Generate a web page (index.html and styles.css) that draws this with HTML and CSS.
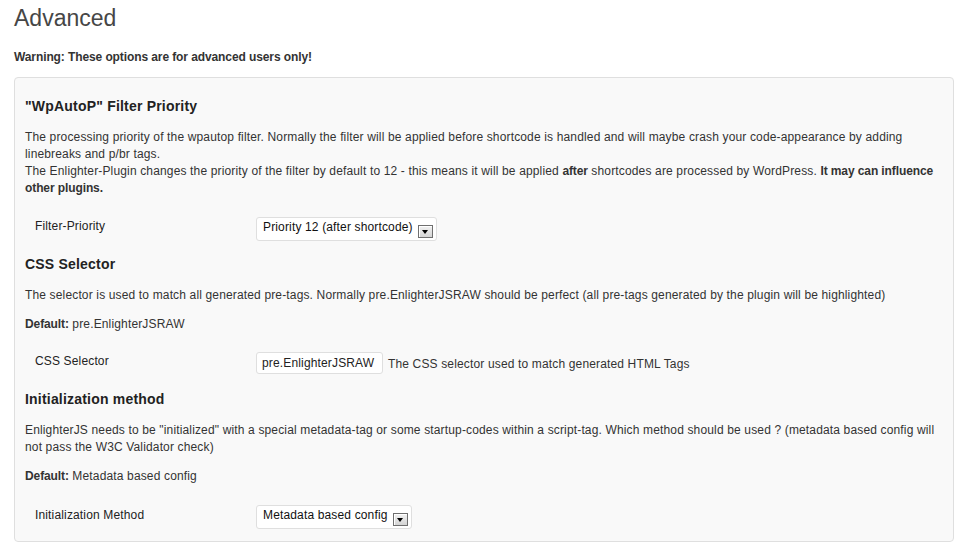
FILE: index.html
```html
<!DOCTYPE html>
<html>
<head>
<meta charset="utf-8">
<title>Advanced</title>
<link rel="stylesheet" href="styles.css">
</head>
<body>
<div class="wrap">
  <h2 class="page-title">Advanced</h2>
  <p class="warning"><strong>Warning: These options are for advanced users only!</strong></p>
  <div class="panel">
    <h3 class="section-title">"WpAutoP" Filter Priority</h3>
    <p class="desc">The processing priority of the wpautop filter. Normally the filter will be applied before shortcode is handled and will maybe crash your code-appearance by adding linebreaks and p/br tags.<br>The Enlighter-Plugin changes the priority of the filter by default to 12 - this means it will be applied <strong>after</strong> shortcodes are processed by WordPress. <strong>It may can influence</strong> <strong>other plugins.</strong></p>
    <div class="form-row row-first">
      <div class="form-label">Filter-Priority</div>
      <div class="form-field">
        <div class="select"><span class="select-text">Priority 12 (after shortcode)</span><span class="select-btn"><span class="select-arrow"></span></span></div>
      </div>
    </div>

    <h3 class="section-title">CSS Selector</h3>
    <p class="desc">The selector is used to match all generated pre-tags. Normally pre.EnlighterJSRAW should be perfect (all pre-tags generated by the plugin will be highlighted)</p>
    <p class="desc"><strong>Default:</strong> pre.EnlighterJSRAW</p>
    <div class="form-row row-input">
      <div class="form-label">CSS Selector</div>
      <div class="form-field">
        <input class="text-input" type="text" value="pre.EnlighterJSRAW">
        <span class="help">The CSS selector used to match generated HTML Tags</span>
      </div>
    </div>

    <h3 class="section-title">Initialization method</h3>
    <p class="desc">EnlighterJS needs to be "initialized" with a special metadata-tag or some startup-codes within a script-tag. Which method should be used ? (metadata based config will not pass the W3C Validator check)</p>
    <p class="desc"><strong>Default:</strong> Metadata based config</p>
    <div class="form-row row-last">
      <div class="form-label">Initialization Method</div>
      <div class="form-field">
        <div class="select"><span class="select-text">Metadata based config</span><span class="select-btn"><span class="select-arrow"></span></span></div>
      </div>
    </div>
  </div>
</div>
</body>
</html>
```

FILE: styles.css
```css
html, body {
  margin: 0;
  background: #ffffff;
}

body {
  font-family: "Liberation Sans", Arial, sans-serif;
  font-size: 12px;
  letter-spacing: 0.15px;
  color: #333333;
}

strong {
  letter-spacing: -0.1px;
}

.wrap {
  padding: 0 16px 0 14px;
}

.page-title {
  margin: 0;
  padding: 4px 0 0;
  font-size: 23px;
  font-weight: normal;
  line-height: 29px;
  letter-spacing: 0;
  color: #464646;
}

.warning {
  margin: 16px 0 11px;
  line-height: 17px;
  color: #333333;
}

.panel {
  background: #f9f9f9;
  border: 1px solid #dfdfdf;
  border-radius: 4px;
  padding: 12px 10px 4px;
}

.section-title {
  margin: 8px 0 14px;
  font-size: 14px;
  font-weight: bold;
  line-height: 17px;
  letter-spacing: 0.2px;
  color: #222222;
}

.desc {
  margin: 0 0 12px;
  line-height: 17px;
}

.form-row {
  display: grid;
  grid-template-columns: 231px 1fr;
  align-items: start;
}

.form-label {
  padding: 8px 0 0 10px;
  line-height: 17px;
  color: #222222;
}

.form-field {
  padding: 7px 0 8px;
  display: flex;
  align-items: center;
}

.row-first .form-label {
  padding-top: 9px;
}

.row-first .form-field {
  padding: 8px 0 7px;
}

.row-input .form-field {
  padding: 7px 0 9px;
}

.row-last .form-label {
  padding-top: 10px;
}

.row-last .form-field {
  padding-top: 8px;
}

.select {
  display: inline-flex;
  align-items: flex-start;
  box-sizing: border-box;
  height: 24px;
  background: #ffffff;
  border: 1px solid #dfdfdf;
  border-radius: 3px;
  padding: 0 3px 0 6px;
  color: #111111;
  line-height: 17px;
}

.select-text {
  white-space: nowrap;
  padding-top: 1px;
}

.select-btn {
  box-sizing: border-box;
  width: 15px;
  height: 13px;
  margin: 7px 0 0 5px;
  border: 1px solid #6f6f6f;
  background: linear-gradient(#f2f2f2, #d4d4d4);
  box-shadow: inset 1px 1px 0 #ffffff;
  display: flex;
  align-items: center;
  justify-content: center;
}

.select-arrow {
  width: 0;
  height: 0;
  border-left: 3.5px solid transparent;
  border-right: 3.5px solid transparent;
  border-top: 4px solid #000000;
  margin-top: 1px;
}

.text-input {
  box-sizing: border-box;
  width: 127px;
  height: 22px;
  margin: 0;
  padding: 0 5px;
  border: 1px solid #dfdfdf;
  border-radius: 3px;
  background: #ffffff;
  font-family: "Liberation Sans", Arial, sans-serif;
  font-size: 12px;
  letter-spacing: 0.15px;
  color: #222222;
  outline: none;
}

.help {
  margin-left: 5px;
  margin-top: 2px;
  line-height: 17px;
  color: #333333;
}
```
